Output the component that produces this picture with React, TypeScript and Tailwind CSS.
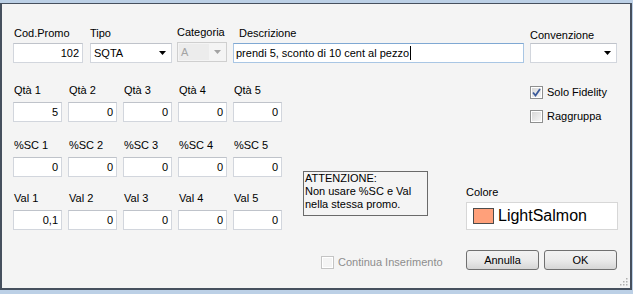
import React from 'react';

const font = { fontFamily: '"Liberation Sans", Arial, sans-serif' };

const Arrow = ({ disabled }: { disabled?: boolean }) => (
  <svg width="7" height="4" viewBox="0 0 7 4" className="shrink-0">
    <path d="M0 0 H7 L3.5 4 Z" fill={disabled ? '#a3a3a3' : '#000'} />
  </svg>
);

const TextBox = ({ value, className = '', align = 'right' }: { value: string; className?: string; align?: 'left' | 'right' }) => (
  <div
    className={`h-[20px] bg-white border border-[#d2d6dd] border-t-[#bfc3ca] flex items-center px-[3px] text-[11px] leading-[13px] text-black ${align === 'right' ? 'justify-end' : 'justify-start'} ${className}`}
  >
    {value}
  </div>
);

const Label = ({ text, className = '' }: { text: string; className?: string }) => (
  <div className={`h-[13px] text-[11px] leading-[13px] text-black whitespace-nowrap ${className}`}>{text}</div>
);

const Check = ({ checked, disabled, label }: { checked?: boolean; disabled?: boolean; label: string }) => (
  <div className="flex items-center h-[13px]">
    <div
      className={`w-[13px] h-[13px] border ${disabled ? 'border-[#c4c4c4]' : 'border-[#8e8f8f]'} bg-white p-[1px] shrink-0`}
    >
      <div
        className={`w-full h-full ${disabled ? 'bg-[#f4f4f4]' : 'bg-gradient-to-br from-[#d8d8d8] to-[#f6f6f6]'} flex items-center justify-center`}
      >
        {checked && (
          <svg width="9" height="9" viewBox="0 0 9 9">
            <path d="M1 4.5 L3.5 7.5 L8 1" fill="none" stroke="#3b5a9a" strokeWidth="1.8" />
          </svg>
        )}
      </div>
    </div>
    <span className={`ml-[4px] text-[11px] leading-[13px] whitespace-nowrap ${disabled ? 'text-[#8d8d8d]' : 'text-black'}`}>{label}</span>
  </div>
);

const Button = ({ text, className = '' }: { text: string; className?: string }) => (
  <div
    className={`h-[20px] rounded-[3px] border border-[#707070] bg-gradient-to-b from-[#f2f2f2] via-[#ebebeb] to-[#d6d6d6] flex items-center justify-center text-[11px] leading-[13px] text-black ${className}`}
  >
    {text}
  </div>
);

const rows = [
  { name: 'Qtà', values: ['5', '0', '0', '0', '0'] },
  { name: '%SC', values: ['0', '0', '0', '0', '0'] },
  { name: 'Val', values: ['0,1', '0', '0', '0', '0'] },
];

export default function App() {
  return (
    <div className="w-[633px] h-[294px] bg-[#bcd0e6] pt-[3px] pr-[1px] pb-[4px]" style={font}>
      <div className="w-full h-full bg-[#f4f4f4] border-t border-l-2 border-r-2 border-b-2 border-[#46505e] relative">
        {/* top row */}
        <div className="flex pt-[23px] pl-[11px]">
          <div className="w-[70px]">
            <Label text="Cod.Promo" className="ml-[1px]" />
            <TextBox value="102" className="mt-[3px]" />
          </div>
          <div className="w-[82px] ml-[7px]">
            <Label text="Tipo" />
            <div className="mt-[3px] h-[20px] bg-white border border-[#d2d6dd] border-t-[#bfc3ca] flex items-center pl-[3px] pr-[5px] justify-between text-[11px] leading-[13px]">
              <span>SQTA</span>
              <Arrow />
            </div>
          </div>
          <div className="w-[50px] ml-[5px]">
            <Label text="Categoria" className="-mt-[1px] mb-[1px]" />
            <div className="mt-[3px] h-[20px] bg-[#f4f4f4] border border-[#cfcfcf] flex items-center justify-between pr-[5px] p-[1px]">
              <div className="h-full w-[30px] bg-[#ececec] flex items-center pl-[2px] text-[11px] leading-[13px] text-[#a3a3a3]">A</div>
              <Arrow disabled />
            </div>
          </div>
          <div className="w-[291px] ml-[6px]">
            <Label text="Descrizione" className="ml-[6px]" />
            <div className="mt-[3px] h-[20px] bg-white border border-[#a9c6e4] border-t-[#7fa8d3] flex items-center pl-[2px] text-[11px] leading-[13px]">
              <span>prendi 5, sconto di 10 cent al pezzo</span>
              <span className="w-[1px] h-[14px] bg-black ml-[1px]" />
            </div>
          </div>
          <div className="w-[87px] ml-[6px]">
            <Label text="Convenzione" className="mt-[2px] -mb-[2px]" />
            <div className="mt-[3px] h-[20px] bg-white border border-[#d2d6dd] border-t-[#bfc3ca] flex items-center justify-end pr-[5px]">
              <Arrow />
            </div>
          </div>
        </div>

        {/* lower area */}
        <div className="flex pl-[11px]">
          <div className="w-[269px]">
            {rows.map((r, i) => (
              <div key={r.name} className={i === 0 ? 'mt-[21px]' : i === 1 ? 'mt-[17px]' : 'mt-[15px]'}>
                <div className="grid grid-cols-5 gap-x-[6px]">
                  {r.values.map((v, j) => (
                    <Label key={j} text={`${r.name} ${j + 1}`} className="ml-[1px]" />
                  ))}
                </div>
                <div className="grid grid-cols-5 gap-x-[6px] mt-[5px]">
                  {r.values.map((v, j) => (
                    <TextBox key={j} value={v} />
                  ))}
                </div>
              </div>
            ))}
          </div>

          <div className="w-[163px] ml-[21px] flex flex-col">
            <div className="mt-[108px] w-[125px] h-[45px] border border-[#6a6a6a] pl-[1px] text-[11px] leading-[13px] text-black">
              <div>ATTENZIONE:</div>
              <div>Non usare %SC e Val</div>
              <div>nella stessa promo.</div>
            </div>
            <div className="mt-[40px] ml-[18px]">
              <Check disabled label="Continua Inserimento" />
            </div>
          </div>

          <div className="w-[152px] flex flex-col">
            <div className="mt-[23px] ml-[64px] flex flex-col gap-[11px]">
              <Check checked label="Solo Fidelity" />
              <Check label="Raggruppa" />
            </div>
            <Label text="Colore" className="mt-[63px]" />
            <div className="mt-[3px] h-[28px] bg-white border border-[#d7d7d7] flex items-center pl-[6px]">
              <div className="w-[21px] h-[16px] border border-[#4c4c4c] bg-[#ffa07a]" />
              <span className="ml-[4px] text-[16px] leading-[18px] text-black">LightSalmon</span>
            </div>
            <div className="mt-[20px] flex">
              <Button text="Annulla" className="w-[73px]" />
              <Button text="OK" className="w-[73px] ml-[5px]" />
            </div>
          </div>
        </div>

        {/* resize grip */}
        <svg className="absolute right-[2px] bottom-[2px]" width="8" height="8" viewBox="0 0 8 8">
          {[[6, 0], [6, 3], [3, 3], [6, 6], [3, 6], [0, 6]].map(([x, y], i) => (
            <rect key={i} x={x} y={y} width="1.5" height="1.5" fill="#b0b0b0" />
          ))}
        </svg>
      </div>
    </div>
  );
}
